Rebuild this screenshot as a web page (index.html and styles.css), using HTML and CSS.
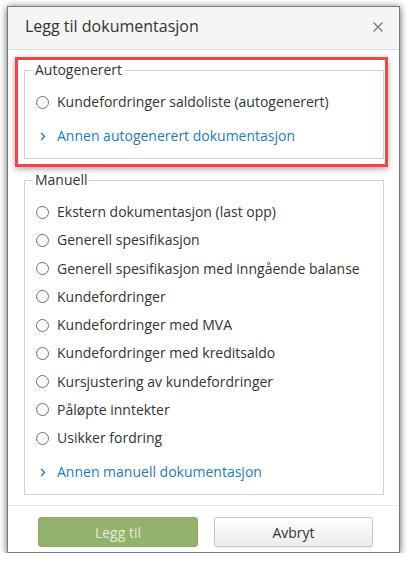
FILE: index.html
```html
<!DOCTYPE html>
<html lang="no">
<head>
<meta charset="utf-8">
<title>Legg til dokumentasjon</title>
<link rel="stylesheet" href="styles.css">
</head>
<body>
<div class="dialog">
  <div class="header">
    <h1 class="title">Legg til dokumentasjon</h1>
    <button class="close" type="button" aria-label="Lukk">
      <svg width="10" height="10" viewBox="0 0 10 10"><path d="M0.5 0.5 L9.5 9.5 M9.5 0.5 L0.5 9.5" stroke="#777" stroke-width="1.3" fill="none"/></svg>
    </button>
  </div>
  <div class="body">
    <fieldset class="group">
      <legend>Autogenerert</legend>
      <label class="option"><span class="radio"></span>Kundefordringer saldoliste (autogenerert)</label>
      <a class="more"><svg class="chev" width="6" height="9" viewBox="0 0 6 9"><path d="M1 1 L4.6 4.5 L1 8" stroke="#1c7cc0" stroke-width="1.3" fill="none"/></svg>Annen autogenerert dokumentasjon</a>
    </fieldset>
    <fieldset class="group manual">
      <legend>Manuell</legend>
      <label class="option"><span class="radio"></span>Ekstern dokumentasjon (last opp)</label>
      <label class="option"><span class="radio"></span>Generell spesifikasjon</label>
      <label class="option"><span class="radio"></span>Generell spesifikasjon med inngående balanse</label>
      <label class="option"><span class="radio"></span>Kundefordringer</label>
      <label class="option"><span class="radio"></span>Kundefordringer med MVA</label>
      <label class="option"><span class="radio"></span>Kundefordringer med kreditsaldo</label>
      <label class="option"><span class="radio"></span>Kursjustering av kundefordringer</label>
      <label class="option"><span class="radio"></span>Påløpte inntekter</label>
      <label class="option"><span class="radio"></span>Usikker fordring</label>
      <a class="more"><svg class="chev" width="6" height="9" viewBox="0 0 6 9"><path d="M1 1 L4.6 4.5 L1 8" stroke="#1c7cc0" stroke-width="1.3" fill="none"/></svg>Annen manuell dokumentasjon</a>
    </fieldset>
  </div>
  <div class="footer">
    <button class="btn primary" type="button">Legg til</button>
    <button class="btn default" type="button">Avbryt</button>
  </div>
  <div class="highlight"></div>
</div>
</body>
</html>
```
FILE: styles.css
```css
html, body {
  margin: 0;
  padding: 0;
  background: #ffffff;
}

body {
  font-family: "Open Sans", "DejaVu Sans", sans-serif;
  font-size: 14px;
  color: #333333;
}

.dialog {
  position: relative;
  margin: 6px 0 0 7px;
  width: 393px;
  box-sizing: border-box;
  background: #ffffff;
  border: 1px solid #7a7a7a;
  box-shadow: 0 1px 7px rgba(0, 0, 0, 0.65);
}

.header {
  display: flex;
  justify-content: space-between;
  align-items: flex-start;
  height: 42px;
  padding: 0 16px 0 17px;
  background: #f5f5f5;
  border-bottom: 1px solid #dddddd;
}

.title {
  margin: 8px 0 0 0;
  font-size: 16px;
  font-weight: 400;
  line-height: 22px;
  color: #333333;
}

.close {
  display: block;
  margin-top: 15px;
  padding: 0;
  width: 10px;
  height: 10px;
  border: 0;
  background: none;
}

.close svg {
  display: block;
}

.body {
  padding: 10px 15px 10px 16px;
}

.group {
  margin: 0;
  min-width: 0;
  padding: 8px 12px 8px 11px;
  border: 1px solid #d2d2d2;
}

.group + .group {
  margin-top: 11px;
}

.group.manual .option {
  height: 28.25px;
}

.group.manual .more {
  margin-top: 6px;
}

.group.manual {
  padding-bottom: 8px;
}

legend {
  margin-left: -3px;
  padding: 0 2px;
  font-size: 14px;
  line-height: 20px;
  color: #333333;
}

.option {
  display: flex;
  align-items: center;
  height: 28px;
  line-height: 28px;
  white-space: nowrap;
}

.radio {
  flex: none;
  width: 13px;
  height: 13px;
  margin-right: 8px;
  box-sizing: border-box;
  border: 1px solid #6f6f6f;
  border-radius: 50%;
  background: #ffffff;
}

.more {
  display: flex;
  align-items: center;
  height: 28px;
  line-height: 28px;
  margin-top: 6px;
  color: #1c7cc0;
  white-space: nowrap;
}

.chev {
  flex: none;
  margin-left: 4px;
  margin-right: 11px;
}

.footer {
  display: flex;
  gap: 16px;
  padding: 11px 0 5px 30px;
  border-top: 1px solid #e5e5e5;
}

.btn {
  height: 30px;
  padding: 0;
  font-family: "Open Sans", "DejaVu Sans", sans-serif;
  font-size: 14px;
  border-radius: 3px;
  box-sizing: border-box;
}

.primary {
  width: 160px;
  background: #93b26b;
  border: 1px solid #8aa964;
  color: #e4ecd8;
}

.default {
  width: 159px;
  background: linear-gradient(#ffffff, #ebebeb);
  border: 1px solid #c6c6c6;
  color: #333333;
  box-shadow: 0 1px 1px rgba(0, 0, 0, 0.08);
}

.highlight {
  position: absolute;
  left: 7px;
  top: 50px;
  width: 373px;
  height: 110px;
  box-sizing: border-box;
  border: 3px solid #f24545;
  box-shadow: 0 2px 6px rgba(0, 0, 0, 0.35);
  pointer-events: none;
}
```
